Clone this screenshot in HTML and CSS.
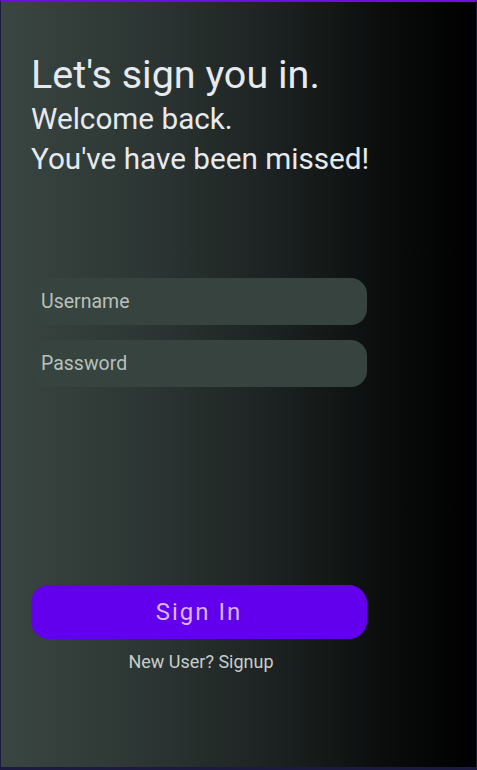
FILE: index.html
```html
<!DOCTYPE html>
<html lang="en">
<head>
<meta charset="utf-8">
<title>Sign in</title>
<link rel="stylesheet" href="styles.css">
</head>
<body>
<main class="screen">
  <section class="intro">
    <h1 class="title">Let's sign you in.</h1>
    <p class="subtitle">Welcome back.</p>
    <p class="subtitle">You've have been missed!</p>
  </section>
  <form class="form">
    <input class="field" type="text" placeholder="Username">
    <input class="field" type="password" placeholder="Password">
  </form>
  <section class="actions">
    <button class="signin" type="button">Sign In</button>
    <p class="signup">New User? Signup</p>
  </section>
</main>
</body>
</html>
```

FILE: styles.css
```css
* { box-sizing: border-box; }
html, body { margin: 0; padding: 0; height: 100%; background: #14132e; }
body { font-family: Roboto, "Noto Sans", sans-serif; }
.screen {
  width: 477px;
  height: 770px;
  border-top: 2px solid #6a12d8;
  border-left: 1px solid #1c1a40;
  border-right: 1px solid #1c1a40;
  border-bottom: 3px solid #1c1a40;
  background: linear-gradient(to right, #3a4642 0%, #2a3331 35%, #1a201f 60%, #080909 85%, #000 100%);
  padding: 0 0 0 30px;
  display: flex;
  flex-direction: column;
}
.intro { padding-top: 49px; color: #e6eaee; }
.title { margin: 0; font-size: 39.5px; font-weight: 400; line-height: 48px; }
.subtitle { margin: 0; font-size: 29.7px; font-weight: 400; line-height: 40px; }
.form { margin-top: 99px; display: flex; flex-direction: column; gap: 15px; width: 336px; }
.field {
  height: 47px;
  border: none;
  border-radius: 16px;
  background: #36433f;
  padding: 0 10px;
  font-family: Roboto, sans-serif;
  font-size: 19.5px;
  color: #e0e4e2;
  outline: none;
}
.field::placeholder { color: #b8c0bd; }
.actions { margin-top: 198px; width: 336px; display: flex; flex-direction: column; align-items: center; }
.signin {
  width: 336px;
  height: 54px;
  border: none;
  border-radius: 18px;
  background: #6200ee;
  color: #d9b8ef;
  font-family: Roboto, sans-serif;
  font-size: 24px;
  letter-spacing: 2px;
  cursor: pointer;
}
.signup { margin: 12px 0 0 4px; font-size: 18px; line-height: 21px; color: #c9cdcb; }
```
